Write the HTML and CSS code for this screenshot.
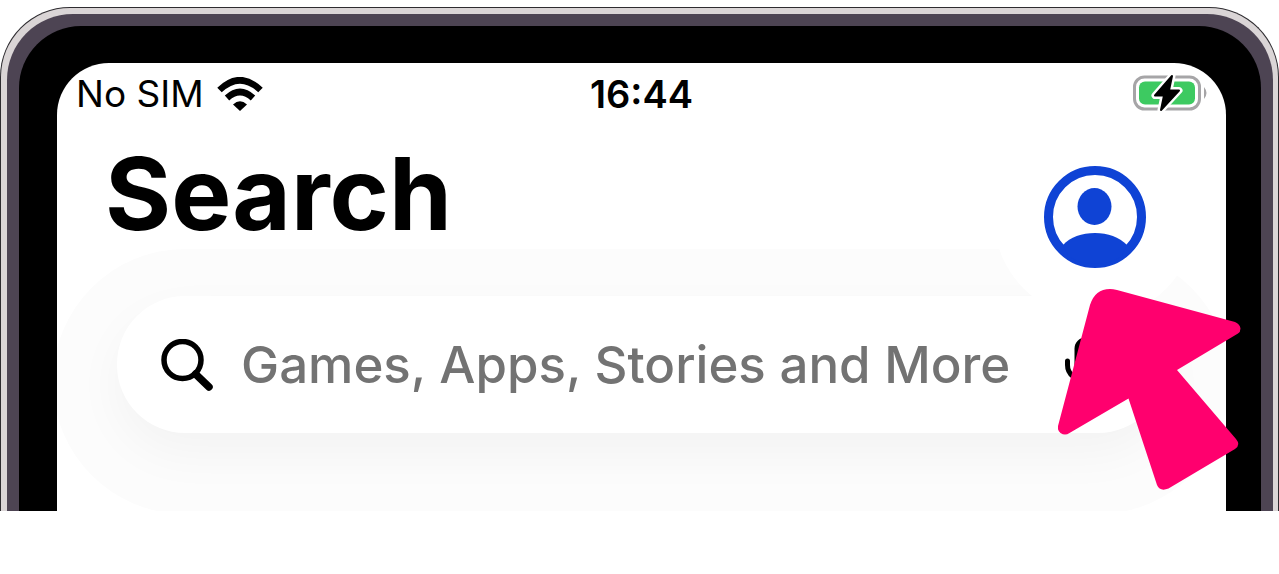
FILE: index.html
```html
<!DOCTYPE html>
<html lang="en">
<head>
<meta charset="utf-8">
<title>Search</title>
<link rel="stylesheet" href="styles.css">
</head>
<body>
<div class="phone">
  <div class="bezel">
    <div class="rim">
      <main class="screen">
        <div class="status">
          <div class="carrier">
            <span>No SIM</span>
            <svg class="wifi" viewBox="0 0 46 34" aria-hidden="true">
              <path d="M2.500 13Q23 -6.500 43.500 13" fill="none" stroke="#000" stroke-width="6.500"/>
              <path d="M10 21Q23 9 36 21" fill="none" stroke="#000" stroke-width="6.500"/>
              <path d="M16 27.500Q23 21 30 27.500L23 34Z"/>
            </svg>
          </div>
          <time class="clock">16:44</time>
          <svg class="battery" viewBox="0 0 74 40" aria-hidden="true">
            <rect x="1.500" y="3" width="65" height="32" rx="10" fill="none" stroke="#a6a5a7" stroke-width="3"/>
            <path d="M71 13Q76 19 71 25Z" fill="#a6a5a7"/>
            <rect x="6" y="7.500" width="56" height="23" rx="6" fill="#3dca61"/>
            <path d="M39 2L22 21.500H31L28 36L46 16.500H36Z" fill="#000" stroke="#fff" stroke-width="7" stroke-linejoin="round"/>
            <path d="M39 2L22 21.500H31L28 36L46 16.500H36Z" stroke="#000" stroke-width="2" stroke-linejoin="round"/>
          </svg>
        </div>
        <header class="header">
          <h1>Search</h1>
          <button class="account" type="button" aria-label="Account">
            <svg viewBox="0 0 102 102" aria-hidden="true">
              <circle cx="51" cy="51" r="46.500" fill="none" stroke="#0f43d5" stroke-width="9"/>
              <ellipse cx="50.500" cy="40.500" rx="17" ry="18.500" fill="#0f43d5"/>
              <path d="M19 79C26 71 38 67 51 67S75 71 83 79L78 90Q51 106 24 90Z" fill="#0f43d5"/>
            </svg>
          </button>
        </header>
        <form class="search">
          <svg class="lens" viewBox="0 0 52 52" aria-hidden="true">
            <circle cx="21.500" cy="21" r="18.500" fill="none" stroke="#000" stroke-width="5.500"/>
            <path d="M34.500 35L48 48" stroke="#000" stroke-width="7.500" stroke-linecap="round"/>
          </svg>
          <input type="search" aria-label="Search the store" placeholder="Games, Apps, Stories and More">
          <button class="mic" type="button" aria-label="Dictate">
            <svg viewBox="0 0 42 56" fill="none" stroke="#000" stroke-width="5" stroke-linecap="round">
              <rect x="13" y="3" width="17" height="33" rx="8.500"/>
              <path d="M3.500 24V28C3.500 48 38.500 48 38.500 28V24M21 43V53M12 53H30"/>
            </svg>
          </button>
        </form>
      </main>
    </div>
  </div>
  <svg class="pointer" viewBox="1058 289 183 201" aria-hidden="true">
    <path fill="#ff006e" d="M1090 305Q1095 289 1110 289Q1113 289 1117 290L1235 322Q1240 324 1240.500 328.500Q1240.500 332 1238 333.500L1177 370L1236 439Q1241 445 1235 449L1168.500 488.500Q1160 492 1157 485L1128.500 398.500L1069.500 433Q1065 436 1060.500 433Q1057 430 1058 426Z"/>
  </svg>
</div>
</body>
</html>
```
FILE: styles.css
```css
* {
  box-sizing: border-box;
}

body {
  margin: 0;
  background: #fff;
  font-family: Inter, "Liberation Sans", sans-serif;
  color: #000;
}

.phone {
  position: relative;
  margin-top: 7px;
  padding: 6px 5px 0 6px;
  border: 1px solid #2e2c30;
  border-bottom: 0;
  border-radius: 70px 70px 0 0;
  background: #dad5d6;
}

.bezel {
  padding: 12px 12px 0;
  border-radius: 66px 66px 0 0;
  background: #4d4453;
}

.rim {
  padding: 37px 35px 0 38px;
  border-radius: 62px 62px 0 0;
  background: #000;
}

.screen {
  overflow: hidden;
  padding-bottom: 78px;
  border-radius: 52px 52px 0 0;
  background: #fff;
}

.status {
  display: grid;
  grid-template-columns: 1fr auto 1fr;
  align-items: center;
  padding: 10px 19px 0;
  font-size: 37px;
  line-height: 42px;
}

.carrier {
  display: flex;
  align-items: center;
  gap: 13px;
}

.wifi {
  width: 46px;
  height: 34px;
}

.clock {
  font-size: 38px;
  font-weight: 600;
}

.battery {
  justify-self: end;
  width: 74px;
  height: 40px;
}

.header {
  position: relative;
  z-index: 1;
  display: flex;
  justify-content: space-between;
  align-items: flex-end;
  padding: 0 80px 0 48px;
}

h1 {
  margin: 18px 0 15px;
  font-size: 101px;
  font-weight: 700;
  line-height: 120px;
}

button {
  padding: 0;
  border: 0;
  background: none;
}

button svg {
  display: block;
  width: 100%;
}

.account {
  width: 102px;
  height: 102px;
  border-radius: 50%;
  background: #fff;
  box-shadow: 0 0 0 50px #fff;
}

.search {
  display: flex;
  align-items: center;
  height: 137px;
  margin: 28px 60px 0;
  padding: 0 60px 0 44px;
  border-radius: 68px;
  background: #fff;
  box-shadow: 0 20px 50px rgba(0, 0, 0, 0.04), 0 17px 0 64px #fcfcfc;
}

.lens {
  flex: none;
  width: 52px;
  height: 52px;
}

input {
  flex: 1;
  min-width: 0;
  margin: 0 20px 0 28px;
  padding: 0;
  border: 0;
  outline: 0;
  background: none;
  font: 500 51px/64px Inter, "Liberation Sans", sans-serif;
}

input::placeholder {
  color: #737373;
  opacity: 1;
}

.mic {
  flex: none;
  width: 42px;
}

.pointer {
  position: absolute;
  z-index: 2;
  top: 281px;
  right: 37px;
  width: 183px;
  height: 201px;
}
```
